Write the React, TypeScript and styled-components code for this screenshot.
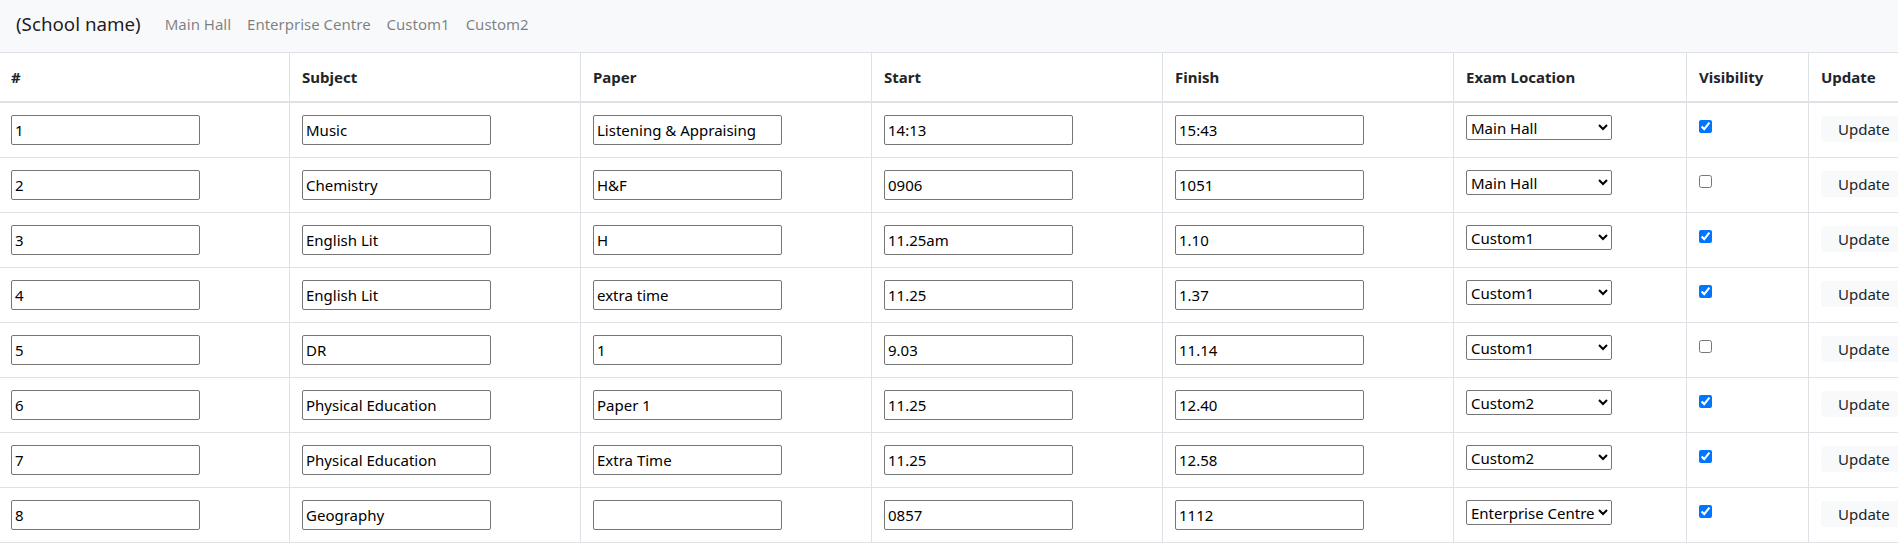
import React from "react";
import styled, { createGlobalStyle } from "styled-components";

const Global = createGlobalStyle`
  *, *::before, *::after { box-sizing: border-box; }
  html, body { margin: 0; padding: 0; overflow: hidden; background: #fff; }
  body {
    font-family: "Noto Sans", "Open Sans", sans-serif;
    font-size: 15px;
    line-height: 24px;
    color: #212529;
  }
`;

const NavBar = styled.nav`
  display: flex;
  align-items: center;
  height: 52px;
  padding: 0 16px 5px 16px;
  background: #f8f9fa;
`;

const Brand = styled.span`
  font-size: 18.75px;
  line-height: 30px;
  color: rgba(0, 0, 0, 0.9);
  margin-right: 16px;
`;

const NavLinks = styled.ul`
  display: flex;
  list-style: none;
  margin: 0;
  padding: 0;
`;

const NavLink = styled.a`
  display: block;
  padding: 0 8px;
  line-height: 24px;
  color: rgba(0, 0, 0, 0.5);
  text-decoration: none;
`;

const Table = styled.table`
  table-layout: fixed;
  border-collapse: separate;
  border-spacing: 0;
  width: 1921px;
`;

const Col = styled.col<{ $w: number }>`
  width: ${(p) => p.$w}px;
`;

const Th = styled.th`
  text-align: left;
  font-weight: 700;
  vertical-align: bottom;
  padding: 12px;
  line-height: 24px;
  border-top: 1px solid #dee2e6;
  border-right: 1px solid #dee2e6;
  border-bottom: 2px solid #dee2e6;
  &:first-child { padding-left: 11px; }
`;

const Td = styled.td`
  vertical-align: top;
  padding: 12px;
  border-right: 1px solid #dee2e6;
  border-bottom: 1px solid #dee2e6;
  &:first-child { padding-left: 11px; }
`;

const TextInput = styled.input`
  display: block;
  width: 189px;
  height: 30px;
  margin: 0;
  padding: 1px 3px;
  border: 1px solid #767676;
  border-radius: 2px;
  background: #fff;
  font: inherit;
  line-height: 24px;
  color: #000;
`;

const Select = styled.select`
  display: block;
  width: 146px;
  height: 25px;
  margin: 0;
  font: inherit;
  color: #000;
  border: 1px solid #767676;
  border-radius: 2px;
  background: #fff;
`;

const Check = styled.input`
  display: block;
  width: 13px;
  height: 13px;
  margin: 5px 0 0 0;
`;

const UpdateButton = styled.button`
  display: block;
  height: 26px;
  margin: 1px 0 0 0;
  padding: 0 17px;
  border: 0;
  border-radius: 4px;
  background: #f8f9fa;
  font: inherit;
  line-height: 26px;
  color: #212529;
  white-space: nowrap;
`;

type Row = {
  id: string;
  subject: string;
  paper: string;
  start: string;
  finish: string;
  location: string;
  visible: boolean;
};

const rows: Row[] = [
  { id: "1", subject: "Music", paper: "Listening & Appraising", start: "14:13", finish: "15:43", location: "Main Hall", visible: true },
  { id: "2", subject: "Chemistry", paper: "H&F", start: "0906", finish: "1051", location: "Main Hall", visible: false },
  { id: "3", subject: "English Lit", paper: "H", start: "11.25am", finish: "1.10", location: "Custom1", visible: true },
  { id: "4", subject: "English Lit", paper: "extra time", start: "11.25", finish: "1.37", location: "Custom1", visible: true },
  { id: "5", subject: "DR", paper: "1", start: "9.03", finish: "11.14", location: "Custom1", visible: false },
  { id: "6", subject: "Physical Education", paper: "Paper 1", start: "11.25", finish: "12.40", location: "Custom2", visible: true },
  { id: "7", subject: "Physical Education", paper: "Extra Time", start: "11.25", finish: "12.58", location: "Custom2", visible: true },
  { id: "8", subject: "Geography", paper: "", start: "0857", finish: "1112", location: "Enterprise Centre", visible: true },
];

const locations = ["Main Hall", "Enterprise Centre", "Custom1", "Custom2"];
const widths = [290, 291, 291, 291, 291, 233, 122, 112];
const headers = ["#", "Subject", "Paper", "Start", "Finish", "Exam Location", "Visibility", "Update"];

export default function App() {
  return (
    <>
      <Global />
      <NavBar>
        <Brand>(School name)</Brand>
        <NavLinks>
          {locations.map((l) => (
            <li key={l}>
              <NavLink href="#">{l}</NavLink>
            </li>
          ))}
        </NavLinks>
      </NavBar>
      <Table>
        <colgroup>
          {widths.map((w, i) => (
            <Col key={i} $w={w} />
          ))}
        </colgroup>
        <thead>
          <tr>
            {headers.map((h) => (
              <Th key={h}>{h}</Th>
            ))}
          </tr>
        </thead>
        <tbody>
          {rows.map((r) => (
            <tr key={r.id}>
              <Td><TextInput type="text" defaultValue={r.id} /></Td>
              <Td><TextInput type="text" defaultValue={r.subject} /></Td>
              <Td><TextInput type="text" defaultValue={r.paper} /></Td>
              <Td><TextInput type="text" defaultValue={r.start} /></Td>
              <Td><TextInput type="text" defaultValue={r.finish} /></Td>
              <Td>
                <Select defaultValue={r.location}>
                  {locations.map((l) => (
                    <option key={l} value={l}>{l}</option>
                  ))}
                </Select>
              </Td>
              <Td><Check type="checkbox" defaultChecked={r.visible} /></Td>
              <Td><UpdateButton type="button">Update</UpdateButton></Td>
            </tr>
          ))}
        </tbody>
      </Table>
    </>
  );
}
